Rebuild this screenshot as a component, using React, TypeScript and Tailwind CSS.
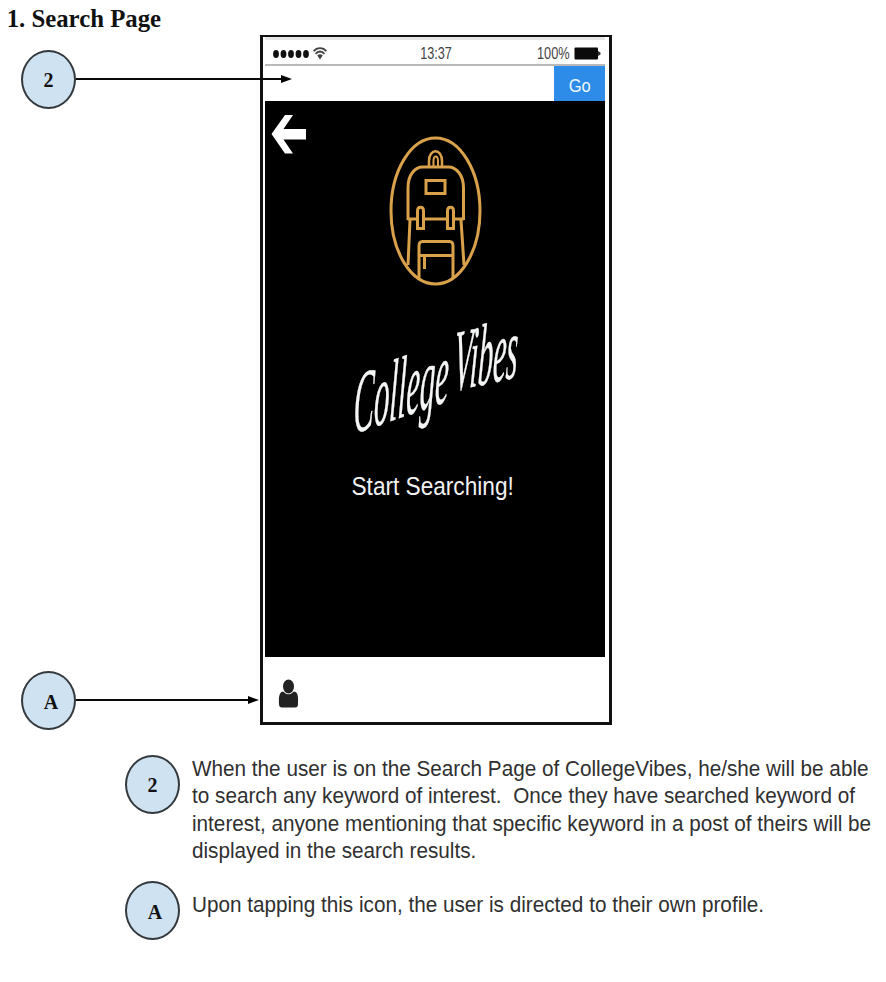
import type { ReactNode } from "react";

const SANS = "font-['Liberation_Sans',Arial,sans-serif]";
const SERIF = "font-['Liberation_Serif','Times_New_Roman',serif]";

function Marker({ label, nudge = "" }: { label: string; nudge?: string }) {
  return (
    <div className="flex h-[59px] w-[55px] shrink-0 items-center justify-center rounded-[50%] border-2 border-[#34393e] bg-[#cfe2f1]">
      <span className={`${SERIF} text-[20px] leading-none font-bold text-[#111] ${nudge}`}>{label}</span>
    </div>
  );
}

function Connector({ length }: { length: number }) {
  return (
    <svg width={length} height="12" className="relative z-10 mb-px shrink-0 overflow-visible">
      <line x1="0" y1="6" x2={length - 9} y2="6" stroke="#0a0a0a" strokeWidth="2" />
      <path d={`M${length - 11} 2 L${length} 6 L${length - 11} 10 Z`} fill="#000" />
    </svg>
  );
}

function StatusBar() {
  return (
    <div className={`${SANS} flex h-[26px] shrink-0 items-center border-b-2 border-[#b9b9b9] pt-[3px] text-[16px] leading-none text-[#444]`}>
      <svg width="73" height="24" viewBox="0 0 73 24" className="-my-1 shrink-0">
        {[11, 18.5, 26, 33.500, 41].map((x) => (
          <ellipse key={x} cx={x} cy="12" rx="2.900" ry="3.900" fill="#111" />
        ))}
        <g fill="none" stroke="#444" strokeWidth="1.800">
          <path d="M48.600 9.300 C52 5.100 58 5.100 61.400 9.300" />
          <path d="M50.600 11.900 C53 8.700 57 8.700 59.400 11.900" />
        </g>
        <path d="M52.200 13.600 Q55 11.100 57.800 13.600 L55 17.500 Z" fill="#444" />
      </svg>
      <div className="flex grow justify-center pr-[3px]">
        <span className="origin-center scale-x-[0.79]">13:37</span>
      </div>
      <div className="flex w-[68px] shrink-0 items-center">
        <span className="w-[36px] origin-left scale-x-[0.8] whitespace-nowrap">100%</span>
        <svg width="30" height="14" viewBox="0 0 30 14" className="shrink-0">
          <rect x="1.500" y="0.500" width="23.500" height="12" rx="1" fill="#0b0b0b" />
          <path d="M25 4 L27.500 5.500 V7.500 L25 9 Z" fill="#333" />
        </svg>
      </div>
    </div>
  );
}

function BackArrow() {
  return (
    <svg width="36" height="40" viewBox="0 0 36 40" className="absolute top-[13px] left-[6px]">
      <path d="M0.500 20 L14 1 H22 L12.500 15 H35 V25.500 H12.500 L22 39.500 H14 Z" fill="#fff" />
    </svg>
  );
}

function Backpack() {
  return (
    <svg width="94" height="152" viewBox="0 0 94 152" fill="none" stroke="#d9a24a" strokeWidth="3">
      <ellipse cx="47.5" cy="76" rx="44.5" ry="73" />
      <g transform="translate(0.5 0)">
        <path d="M40.5 31 V26 C40.5 13 53.5 13 53.5 26 V31" strokeWidth="2.5" />
        <path d="M45 31 V26 C45 20 49.5 20 49.5 26 V31" strokeWidth="2" />
        <path d="M19.5 85 V53 C19.5 39 27 32 34 32 H60 C67 32 75 39 75 53 V85" />
        <rect x="37.5" y="45.5" width="19" height="13" />
        <path d="M19 84 H28 M36 84 H58 M66 84 H75" />
        <path d="M29 93.5 V76 C29 71 35 71 35 76 V93.5 Z" />
        <path d="M59 93.5 V76 C59 71 65 71 65 76 V93.5 Z" />
        <path d="M21.5 85 L19.5 130 M72.5 85 L75.5 130" />
        <path d="M30.5 143 V111 Q30.5 106.5 34 106.5 H61 Q64.5 106.5 64.5 111 V143 M31 120.5 H64" />
        <path d="M36 121 V134" />
      </g>
    </svg>
  );
}

function Wordmark() {
  const style = `${SERIF} text-[40px] italic`;
  return (
    <svg width="180" height="124" viewBox="0 0 180 124" className="shrink-0 overflow-visible" fill="#f4f6f5" stroke="#f4f6f5" strokeWidth="0.25">
      <text className={style} transform="matrix(.78 -.27 -.07 2.2 6 119)" textLength="122" lengthAdjust="spacingAndGlyphs">
        College
      </text>
      <text className={style} transform="matrix(.78 -.17 -.1 2.2 106 76)" textLength="82" lengthAdjust="spacingAndGlyphs">
        Vibes
      </text>
    </svg>
  );
}

function Phone() {
  return (
    <main className="flex h-[690px] w-[352px] shrink-0 flex-col border-t-2 border-r-[3px] border-b-[3px] border-l-[3px] border-[#111] bg-white pr-[4px] pl-[2px]">
      <div className="h-[3px] shrink-0 bg-[#e6e6e6]" />
      <StatusBar />
      <div className="flex h-[35px] shrink-0 justify-end">
        <div className={`${SANS} flex w-[51px] items-center justify-center bg-[#2c8ce8] pt-[3px] text-[19px] leading-none text-[#eef6ff]`}>
          <span className="scale-x-[0.87]">Go</span>
        </div>
      </div>
      <section className="relative flex h-[556px] shrink-0 flex-col items-center bg-black pt-[34px]">
        <BackArrow />
        <Backpack />
        <div className="mt-[28px] pl-[3px]">
          <Wordmark />
        </div>
        <p className={`${SANS} mt-[35px] mr-[5px] scale-x-[0.905] text-[25px] leading-[25px] whitespace-nowrap text-[#f1f1f1]`}>
          Start Searching!
        </p>
      </section>
      <footer className="flex grow items-center pt-[9px] pl-[13px]">
        <svg width="22" height="32" viewBox="0 0 22 32" fill="#222">
          <path d="M5 13.500 C0 14 1 23 1 26 Q1 29.500 4 29.500 H17 Q20 29.500 20 26 C20 22 21 14 16 13.500 Q10.500 19 5 13.500Z" />
          <ellipse cx="10.500" cy="8.500" rx="5.500" ry="7" />
        </svg>
      </footer>
    </main>
  );
}

function LegendItem({ label, nudge, children }: { label: string; nudge?: string; children: ReactNode }) {
  return (
    <div className="flex">
      <Marker label={label} nudge={nudge} />
      <div className={`${SANS} ml-[12px] w-[730px] shrink-0 origin-left scale-x-[0.946] text-[21.900px] leading-[27.300px] whitespace-pre text-[#303030]`}>
        {children}
      </div>
    </div>
  );
}

export default function App() {
  return (
    <div className="h-[982px] w-[886px] overflow-hidden bg-white">
      <h1 className={`${SERIF} h-[35px] w-[200px] origin-left scale-x-[0.953] pt-[5px] pl-[7px] text-[26px] leading-[28px] font-bold whitespace-nowrap text-[#111]`}>
        1. Search Page
      </h1>
      <div className="flex h-[690px]">
        <aside className="w-[260px] shrink-0 pt-[15px] pl-[21px]">
          <div className="flex items-center">
            <Marker label="2" />
            <Connector length={216} />
          </div>
          <div className="mt-[562px] flex items-center">
            <Marker label="A" nudge="pt-[2px] pl-[5px]" />
            <Connector length={183} />
          </div>
        </aside>
        <Phone />
      </div>
      <section className="pt-[30px] pl-[125px]">
        <LegendItem label="2">
          <p>When the user is on the Search Page of CollegeVibes, he/she will be able</p>
          <p>{"to search any keyword of interest.  Once they have searched keyword of"}</p>
          <p>interest, anyone mentioning that specific keyword in a post of theirs will be</p>
          <p>displayed in the search results.</p>
        </LegendItem>
        <div className="pt-[17px]">
          <LegendItem label="A" nudge="pt-[2px] pl-[5px]">
            <p className="pt-[10px]">Upon tapping this icon, the user is directed to their own profile.</p>
          </LegendItem>
        </div>
      </section>
    </div>
  );
}
